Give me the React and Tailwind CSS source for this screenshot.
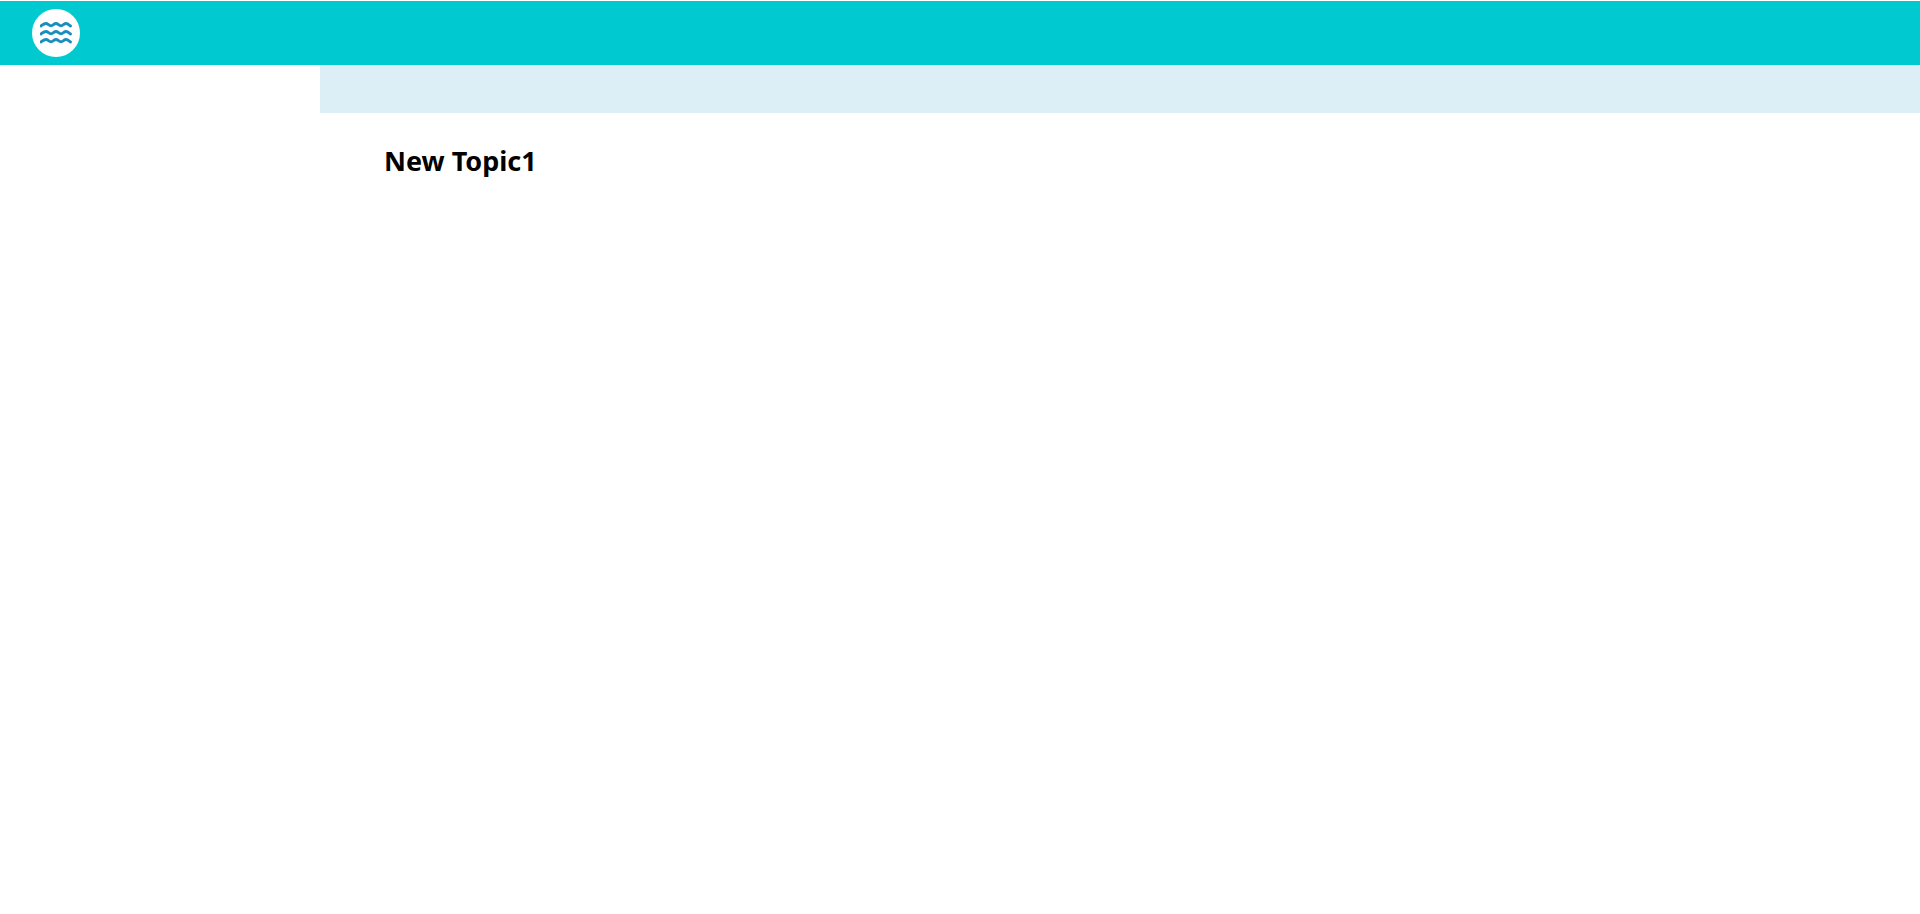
import React from 'react';

// three scalloped rows, same shape shifted down
function WaveLogo() {
    const wave = "M1 4 C3 2.5 4 1.5 6 1.5 C8 1.5 9 3.8 11 3.8 C13 3.8 14 1.5 16 1.5 C18 1.5 19 3.8 21 3.8 C23 3.8 24 1.5 26 1.5 C28 1.5 29 3 30.5 4";
    return (
        <svg width="32" height="22" viewBox="0 0 32 22" fill="none" stroke="#1a8fbd" strokeWidth="2.9" strokeLinecap="round">
            <path d={wave} />
            <path d={wave} transform="translate(0 8)" />
            <path d={wave} transform="translate(0 16)" />
        </svg>
    );
}

export default function App() {
    return (
        <div className="min-h-screen bg-white pt-px font-['Noto_Sans',sans-serif]">
            <header className="h-[64px] bg-[#00cad0] flex items-center pl-8">
                <div className="w-12 h-12 rounded-full bg-white flex items-center justify-center">
                    <WaveLogo />
                </div>
            </header>
            <div className="ml-[320px]">
                <div className="h-12 bg-[#dceff7]"></div>
                <h1 className="pl-[64px] pt-[30px] text-[27px] leading-[36px] font-bold text-black">New Topic1</h1>
            </div>
        </div>
    );
}
